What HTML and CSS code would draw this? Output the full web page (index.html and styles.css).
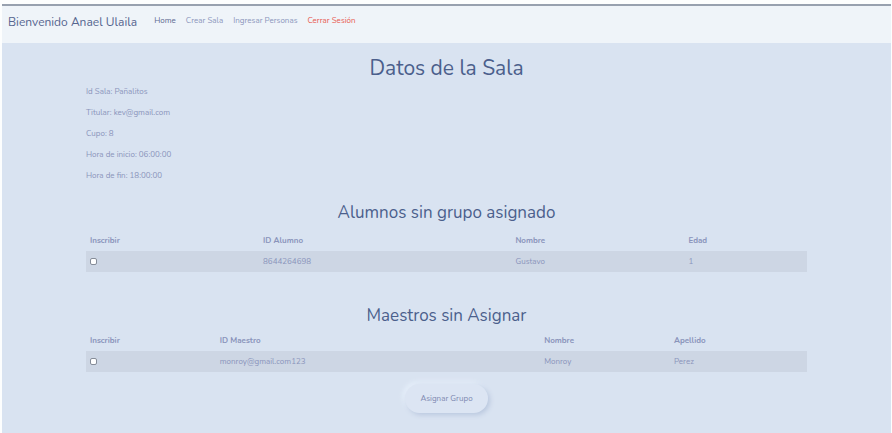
FILE: index.html
```html
<!DOCTYPE html>
<html lang="es">
<head>
<meta charset="utf-8">
<meta name="viewport" content="width=device-width, initial-scale=1">
<title>Datos de la Sala</title>
<link rel="stylesheet" href="styles.css">
</head>
<body>
<div class="page">
  <nav class="navbar">
    <a class="brand" href="#">Bienvenido Anael Ulaila</a>
    <ul class="menu">
      <li><a class="active" href="#">Home</a></li>
      <li><a href="#">Crear Sala</a></li>
      <li><a href="#">Ingresar Personas</a></li>
      <li><a class="logout" href="#">Cerrar Sesión</a></li>
    </ul>
  </nav>
  <main class="container">
    <h1>Datos de la Sala</h1>
    <div class="details">
      <p>Id Sala: Pañalitos</p>
      <p>Titular: kev@gmail.com</p>
      <p>Cupo: 8</p>
      <p>Hora de inicio: 06:00:00</p>
      <p>Hora de fin: 18:00:00</p>
    </div>
    <form>
      <section class="group">
        <h2>Alumnos sin grupo asignado</h2>
        <table class="students">
          <thead>
            <tr><th>Inscribir</th><th>ID Alumno</th><th>Nombre</th><th>Edad</th></tr>
          </thead>
          <tbody>
            <tr><td><input type="checkbox" aria-label="Inscribir a Gustavo"></td><td>8644264698</td><td>Gustavo</td><td>1</td></tr>
          </tbody>
        </table>
      </section>
      <section class="group">
        <h2>Maestros sin Asignar</h2>
        <table class="teachers">
          <thead>
            <tr><th>Inscribir</th><th>ID Maestro</th><th>Nombre</th><th>Apellido</th></tr>
          </thead>
          <tbody>
            <tr><td><input type="checkbox" aria-label="Inscribir a Monroy Perez"></td><td>monroy@gmail.com123</td><td>Monroy</td><td>Perez</td></tr>
          </tbody>
        </table>
      </section>
      <button class="submit" type="submit">Asignar Grupo</button>
    </form>
  </main>
</div>
</body>
</html>
```
FILE: styles.css
```css
* {
  box-sizing: border-box;
}

body {
  margin: 0;
  background: #fdfefe;
  color: #8a94bb;
  font: 8px/13px Nunito, Lato, sans-serif;
}

.page {
  display: flex;
  flex-direction: column;
  min-height: 100vh;
  padding: 4px 1px 0 2px;
}

.navbar {
  display: flex;
  align-items: flex-start;
  gap: 17px;
  padding: 8px 6px 13px;
  border-top: 2px solid #98a1af;
  background: #eff4f9;
}

a {
  color: inherit;
  text-decoration: none;
}

.brand {
  color: #56658f;
  font-size: 12px;
  line-height: 16px;
}

.menu {
  display: flex;
  gap: 10px;
  margin: 0;
  padding: 0;
  list-style: none;
}

.menu .active {
  color: #5d6990;
}

.menu .logout {
  color: #e8584f;
}

.container {
  flex: 1;
  padding: 12px 84px 0;
  background: #d9e3f1;
}

h1,
h2 {
  margin: 0;
  color: #4b5f8c;
  font-weight: 400;
  text-align: center;
}

h1 {
  font-size: 21px;
  line-height: 26px;
}

h2 {
  font-size: 17px;
  line-height: 20px;
}

.details {
  margin: 4px 0 21px;
}

.details p {
  margin: 0 0 8px;
}

.group {
  margin-bottom: 34px;
}

.group:last-of-type {
  margin-bottom: 12px;
}

table {
  width: 100%;
  border-collapse: collapse;
  table-layout: fixed;
}

.students {
  margin-top: 7px;
}

.teachers {
  margin-top: 4px;
}

th,
td {
  height: 21px;
  padding: 4px;
  text-align: left;
}

tbody tr {
  background: #cdd6e4;
}

.students th:nth-child(1),
.students th:nth-child(3) {
  width: 24%;
}

.students th:nth-child(2) {
  width: 35%;
}

.teachers th:nth-child(1),
.teachers th:nth-child(3) {
  width: 18%;
}

.teachers th:nth-child(2) {
  width: 45%;
}

input {
  display: block;
  width: 7px;
  height: 7px;
  margin: 0;
  border: 1px solid #858c98;
  border-radius: 2px;
  background: #fff;
  appearance: none;
}

input:checked {
  background: #4b5f8c;
}

.submit {
  display: block;
  margin: 0 auto;
  padding: 8px 15px;
  border: 0;
  border-radius: 15px;
  background: #dce5f3;
  box-shadow: 2px 2px 5px #b9c7de, -2px -2px 5px #e8f1fb;
  color: #7e89b1;
  font: inherit;
}
```
